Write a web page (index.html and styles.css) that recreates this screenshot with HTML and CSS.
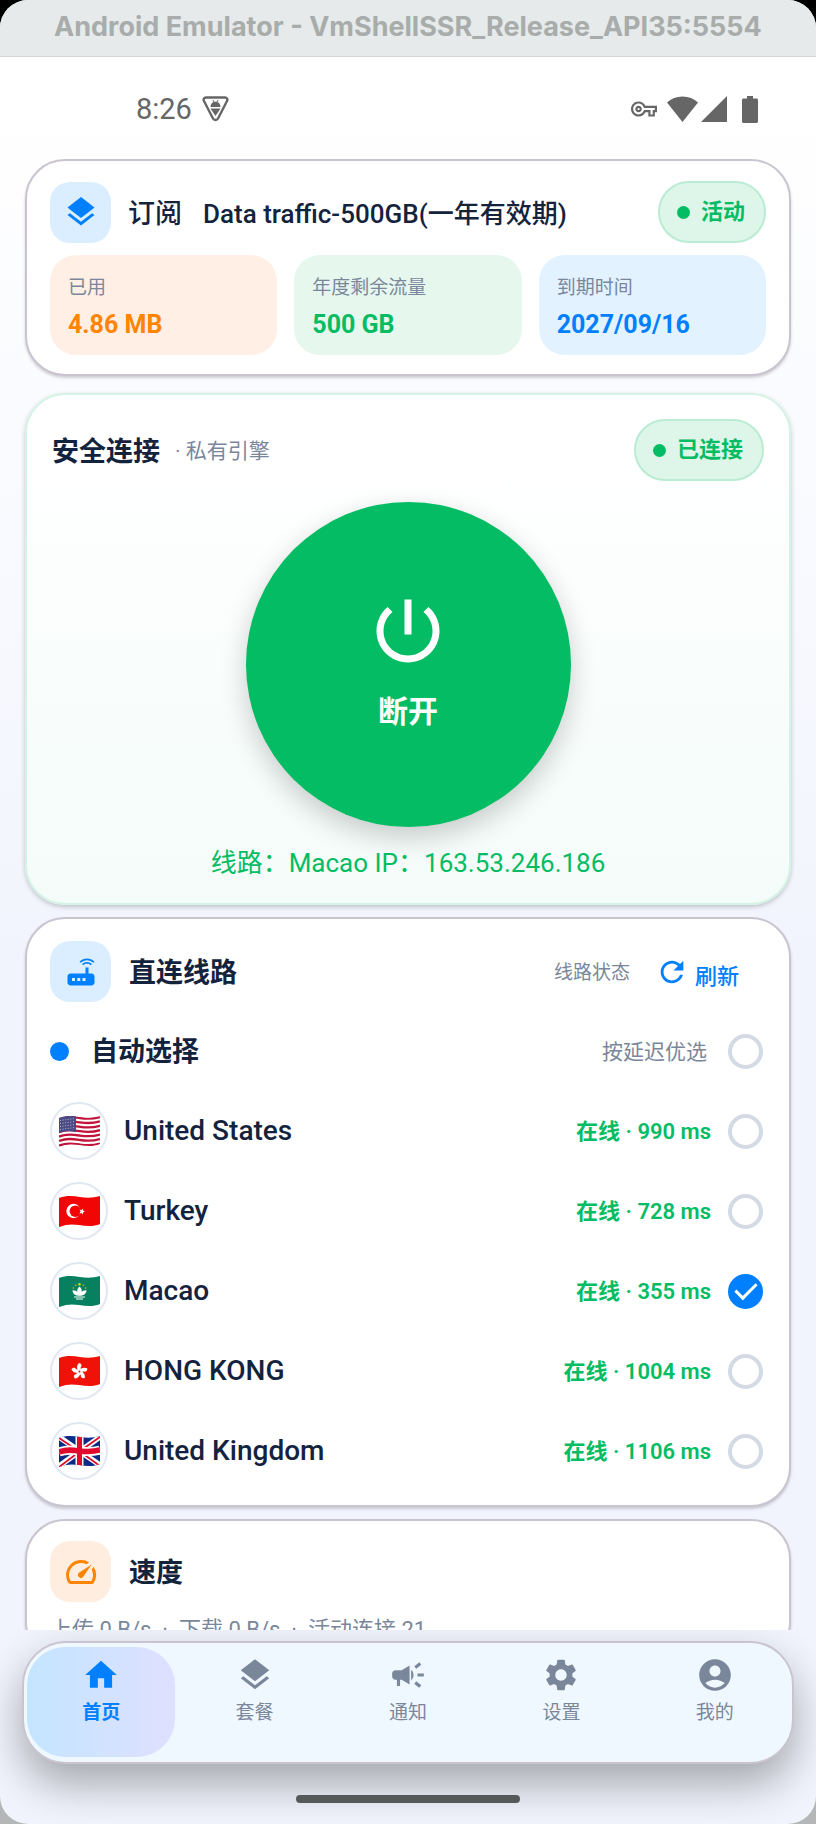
FILE: index.html
```html
<!DOCTYPE html>
<html lang="zh-CN">
<head>
  <meta charset="UTF-8" />
  <meta name="viewport" content="width=device-width, initial-scale=1" />
  <title>VmShell SSR</title>
  <link rel="stylesheet" href="styles.css">
</head>
<body>
  <div class="window">
    <div class="titlebar">Android Emulator - VmShellSSR_Release_API35:5554</div>

    <div class="statusbar">
      <span class="clock">8:26</span>
      <svg class="status-bug" viewBox="0 0 27 26" aria-hidden="true">
        <path d="M4 1.5h19c2 0 3 1.8 2 3.5L16 22.5c-1 2-4 2-5 0L2 5c-1-1.700 0-3.500 2-3.500z" fill="none" stroke="currentColor" stroke-width="2.4"/>
        <path d="M8.5 11c0-2.400 1.400-4.300 3-5L10.400 4h1l1 1.700h2.200l1-1.700h1l-1.100 2c1.600.7 3 2.600 3 5zM8.500 12.500h10L13.500 20z" fill="currentColor"/>
      </svg>
      <div class="status-icons">
        <svg class="status-key" viewBox="0 0 24 24" aria-hidden="true"><path d="M22 19h-6v-4h-2.680c-1.140 2.420-3.600 4-6.320 4-3.860 0-7-3.140-7-7s3.140-7 7-7c2.720 0 5.170 1.580 6.320 4H24v6h-2v4zm-4-2h2v-4h2v-2H11.940l-.23-.67C11.010 8.340 9.110 7 7 7c-2.760 0-5 2.240-5 5s2.240 5 5 5c2.110 0 4.010-1.340 4.710-3.330l.23-.67H18v4zM7 15c-1.650 0-3-1.350-3-3s1.350-3 3-3 3 1.350 3 3-1.350 3-3 3zm0-4c-.55 0-1 .45-1 1s.45 1 1 1 1-.45 1-1-.45-1-1-1z"/></svg>
        <svg class="status-wifi" viewBox="0 0 31 26" aria-hidden="true"><path d="M15.500 26L0 6.500C4 2.500 9.500.5 15.500.5S27 2.500 31 6.500z"/></svg>
        <svg class="status-signal" viewBox="0 0 26 26" aria-hidden="true"><path d="M0 26L26 0v26z"/></svg>
        <svg class="status-battery" viewBox="0 0 16 27" aria-hidden="true"><path d="M5 0h6v2.500h3.500c.8 0 1.500.7 1.500 1.500v21.500c0 .8-.7 1.500-1.500 1.500h-13C.7 27 0 26.300 0 25.500V4c0-.8.7-1.500 1.500-1.500H5z"/></svg>
      </div>
    </div>

    <main class="content">
      <section class="card subscription">
        <div class="card-head">
          <span class="icon-box blue">
            <svg viewBox="0 0 24 24" aria-hidden="true"><path d="M11.990 18.540l-7.370-5.730L3 14.070l9 7 9-7-1.630-1.270-7.380 5.740zM12 16l7.360-5.730L21 9l-9-7-9 7 1.630 1.270L12 16z"/></svg>
          </span>
          <h2 class="sub-title">订阅</h2>
          <span class="plan-name">Data traffic-500GB(一年有效期)</span>
          <span class="pill">活动</span>
        </div>
        <div class="stats">
          <div class="stat used">
            <span class="stat-label">已用</span>
            <strong class="stat-value">4.86 MB</strong>
          </div>
          <div class="stat left">
            <span class="stat-label">年度剩余流量</span>
            <strong class="stat-value">500 GB</strong>
          </div>
          <div class="stat expiry">
            <span class="stat-label">到期时间</span>
            <strong class="stat-value">2027/09/16</strong>
          </div>
        </div>
      </section>

      <section class="card connection">
        <div class="connection-head">
          <h2 class="connection-title">安全连接</h2>
          <span class="engine">· 私有引擎</span>
          <span class="pill">已连接</span>
        </div>
        <button class="power" type="button">
          <svg viewBox="0 0 24 24" aria-hidden="true"><path d="M13 3h-2v10h2V3zm4.830 2.170l-1.420 1.420C17.990 7.860 19 9.810 19 12c0 3.870-3.130 7-7 7s-7-3.130-7-7c0-2.190 1.010-4.140 2.580-5.420L6.170 5.170C4.230 6.820 3 9.260 3 12c0 4.970 4.030 9 9 9s9-4.030 9-9c0-2.740-1.230-5.180-3.170-6.830z"/></svg>
          <span>断开</span>
        </button>
        <p class="route-info">线路：Macao IP：163.53.246.186</p>
      </section>

      <section class="card lines">
        <div class="card-head">
          <span class="icon-box blue">
            <svg viewBox="0 0 24 24" aria-hidden="true"><path d="M20.200 5.900l.8-.8C19.600 3.700 17.800 3 16 3s-3.600.7-5 2.100l.8.8C13 4.800 14.500 4.200 16 4.200s3 .6 4.200 1.700zm-.9.8c-.9-.9-2.100-1.400-3.300-1.400s-2.400.5-3.300 1.400l.8.8c.7-.7 1.600-1 2.500-1 .9 0 1.800.3 2.500 1l.8-.8zM19 13h-2V9h-2v4H5c-1.100 0-2 .9-2 2v4c0 1.100.9 2 2 2h14c1.100 0 2-.9 2-2v-4c0-1.100-.9-2-2-2zM8 18H6v-2h2v2zm3.500 0h-2v-2h2v2zm3.500 0h-2v-2h2v2z"/></svg>
          </span>
          <h2 class="card-title">直连线路</h2>
          <span class="lines-status">线路状态</span>
          <button class="refresh" type="button">
            <svg viewBox="0 0 24 24" aria-hidden="true"><path d="M17.650 6.350C16.200 4.900 14.210 4 12 4c-4.420 0-7.990 3.580-7.990 8s3.570 8 7.990 8c3.730 0 6.840-2.550 7.730-6h-2.080c-.82 2.330-3.040 4-5.650 4-3.310 0-6-2.690-6-6s2.690-6 6-6c1.660 0 3.140.69 4.220 1.780L13 11h7V4l-2.350 2.350z"/></svg>
            <span>刷新</span>
          </button>
        </div>

        <label class="line auto">
          <span class="auto-dot"></span>
          <span class="line-name">自动选择</span>
          <span class="line-hint">按延迟优选</span>
          <input type="radio" name="line" value="auto">
        </label>

        <label class="line">
          <span class="flag">
            <svg viewBox="0 0 41 31" aria-hidden="true">
              <defs>
                <clipPath id="wave"><path d="M0 2C8-1 14 0 21 1s13 1 20-1v28c-7 3-14 2-21 1S8 28 0 31z"/></clipPath>
                <path id="stripe" d="M0 2C8-1 14 0 21 1s13 1 20-1"/>
              </defs>
              <g clip-path="url(#wave)">
                <rect width="41" height="31" fill="#fff"/>
                <g fill="none" stroke="#c2143a" stroke-width="2.3">
                  <use href="#stripe" y="1"/><use href="#stripe" y="5.4"/><use href="#stripe" y="9.8"/><use href="#stripe" y="14.2"/><use href="#stripe" y="18.6"/><use href="#stripe" y="23"/><use href="#stripe" y="27.6"/>
                </g>
                <path d="M0 0h17v16.200C11 14.600 6 14.900 0 17z" fill="#4a4a86"/>
                <path d="M1 4.500l15-2M1 7.500l15-2M1 10.500l15-2M1 13.500l15-2" stroke="#b9b9d6" stroke-width="1" stroke-dasharray="1 1.6"/>
              </g>
            </svg>
          </span>
          <span class="line-name">United States</span>
          <span class="line-ping">在线 · 990 ms</span>
          <input type="radio" name="line" value="us">
        </label>

        <label class="line">
          <span class="flag">
            <svg viewBox="0 0 41 31" aria-hidden="true">
              <g clip-path="url(#wave)">
                <rect width="41" height="31" fill="#f20505"/>
                <circle cx="14.5" cy="15" r="7.2" fill="#fff"/>
                <circle cx="16.4" cy="15.2" r="5.8" fill="#f20505"/>
                <path d="M26 15.500l-2.100.9.100 2.200-1.500-1.700-2.100.5 1.200-1.900-1.100-1.900 2.100.6 1.500-1.600.1 2.200z" fill="#fff"/>
              </g>
            </svg>
          </span>
          <span class="line-name">Turkey</span>
          <span class="line-ping">在线 · 728 ms</span>
          <input type="radio" name="line" value="tr">
        </label>

        <label class="line">
          <span class="flag">
            <svg viewBox="0 0 41 31" aria-hidden="true">
              <g clip-path="url(#wave)">
                <rect width="41" height="31" fill="#06805f"/>
                <path d="M20.500 10.500c1.900 1.700 2.600 3.500 2.200 5.500 1-1.200 2.500-1.900 4.800-1.800-.1 3.600-3.100 5.600-7 5.600s-6.900-2-7-5.600c2.300-.1 3.800.6 4.800 1.800-.4-2 .3-3.800 2.200-5.500z" fill="#fff"/>
                <path d="M15 21h11M17 23h7" stroke="#fff" stroke-width="1"/>
                <circle cx="20.5" cy="8.2" r="1.2" fill="#f5d31d"/>
                <g fill="#c5c81d"><circle cx="16.7" cy="9.300" r=".8"/><circle cx="24.300" cy="9.300" r=".8"/><circle cx="14.400" cy="12" r=".8"/><circle cx="26.600" cy="12" r=".8"/></g>
              </g>
            </svg>
          </span>
          <span class="line-name">Macao</span>
          <span class="line-ping">在线 · 355 ms</span>
          <input type="radio" name="line" value="mo" checked>
        </label>

        <label class="line">
          <span class="flag">
            <svg viewBox="0 0 41 31" aria-hidden="true">
              <defs><path id="petal" d="M20.500 15.500c-3-1.500-3.400-5.600-.4-8.400 2.600.6 3.200 3.200 1.400 4.700.9 1.300.3 2.700-1 3.700z"/></defs>
              <g clip-path="url(#wave)">
                <rect width="41" height="31" fill="#f01208"/>
                <g fill="#fff">
                  <use href="#petal"/><use href="#petal" transform="rotate(72 20.500 15.500)"/><use href="#petal" transform="rotate(144 20.500 15.500)"/><use href="#petal" transform="rotate(216 20.500 15.500)"/><use href="#petal" transform="rotate(288 20.500 15.500)"/>
                </g>
                <circle cx="20.5" cy="15.5" r="1" fill="#f01208"/>
              </g>
            </svg>
          </span>
          <span class="line-name">HONG KONG</span>
          <span class="line-ping">在线 · 1004 ms</span>
          <input type="radio" name="line" value="hk">
        </label>

        <label class="line">
          <span class="flag">
            <svg viewBox="0 0 41 31" aria-hidden="true">
              <g clip-path="url(#wave)">
                <rect width="41" height="31" fill="#0b2a86"/>
                <path d="M0 1l41 28M0 30L41 1" stroke="#fff" stroke-width="5.5"/>
                <path d="M0 2l20 13.500M41 30L21 15.500M0 31l20-15M41 1L21 15" stroke="#e00b2c" stroke-width="1.8"/>
                <path d="M20.500 0v31" stroke="#fff" stroke-width="8"/>
                <path d="M0 16c8-3 14-2 21-1s13 1 20-1" stroke="#fff" stroke-width="9" fill="none"/>
                <path d="M20.500 0v31" stroke="#e00b2c" stroke-width="5"/>
                <path d="M0 16c8-3 14-2 21-1s13 1 20-1" stroke="#e00b2c" stroke-width="5.5" fill="none"/>
              </g>
            </svg>
          </span>
          <span class="line-name">United Kingdom</span>
          <span class="line-ping">在线 · 1106 ms</span>
          <input type="radio" name="line" value="uk">
        </label>
      </section>

      <section class="card speed">
        <div class="card-head">
          <span class="icon-box orange">
            <svg viewBox="0 0 24 24" aria-hidden="true"><path d="M20.380 8.570l-1.230 1.850a8 8 0 0 1-.22 7.580H5.070A8 8 0 0 1 15.580 6.850l1.850-1.230A10 10 0 0 0 3.350 19a2 2 0 0 0 1.720 1h13.850a2 2 0 0 0 1.740-1 10 10 0 0 0-.27-10.440zm-9.790 6.840a2 2 0 0 0 2.830 0l5.660-8.490-8.490 5.660a2 2 0 0 0 0 2.830z"/></svg>
          </span>
          <h2 class="card-title">速度</h2>
        </div>
        <p class="speed-info">上传 0 B/s &nbsp;·&nbsp; 下载 0 B/s &nbsp;·&nbsp; 活动连接 21</p>
      </section>
    </main>

    <footer class="bottom">
      <nav class="tabs">
        <a class="tab active" href="#home">
          <svg viewBox="0 0 24 24" aria-hidden="true"><path d="M10 20v-6h4v6h5v-8h3L12 3 2 12h3v8z"/></svg>
          <span>首页</span>
        </a>
        <a class="tab" href="#plans">
          <svg viewBox="0 0 24 24" aria-hidden="true"><path d="M11.990 18.540l-7.370-5.730L3 14.070l9 7 9-7-1.630-1.270-7.380 5.740zM12 16l7.360-5.730L21 9l-9-7-9 7 1.630 1.270L12 16z"/></svg>
          <span>套餐</span>
        </a>
        <a class="tab" href="#notices">
          <svg viewBox="0 0 24 24" aria-hidden="true"><path d="M18 11v2h4v-2h-4zm-2 6.610c.96.71 2.210 1.650 3.200 2.390.4-.53.8-1.070 1.200-1.600-.99-.74-2.240-1.680-3.200-2.400-.4.54-.8 1.080-1.200 1.610zM20.400 5.600c-.4-.53-.8-1.070-1.200-1.600-.99.74-2.240 1.680-3.200 2.400.4.53.8 1.070 1.200 1.600.96-.72 2.210-1.650 3.200-2.400zM4 9c-1.100 0-2 .9-2 2v2c0 1.100.9 2 2 2h1v4h2v-4h1l5 3V6L8 9H4zm11.500 3c0-1.330-.58-2.530-1.500-3.350v6.690c.92-.81 1.500-2.010 1.500-3.340z"/></svg>
          <span>通知</span>
        </a>
        <a class="tab" href="#settings">
          <svg viewBox="0 0 24 24" aria-hidden="true"><path d="M19.140 12.940c.04-.3.06-.61.06-.94 0-.32-.02-.64-.07-.94l2.030-1.580c.18-.14.23-.41.12-.61l-1.920-3.320c-.12-.22-.37-.29-.59-.22l-2.390.96c-.5-.38-1.030-.7-1.620-.94l-.36-2.540c-.04-.24-.24-.41-.48-.41h-3.840c-.24 0-.43.17-.47.41l-.36 2.540c-.59.24-1.130.57-1.620.94l-2.390-.96c-.22-.08-.47 0-.59.22L2.740 8.870c-.12.21-.08.47.12.61l2.030 1.580c-.05.3-.09.63-.09.94s.02.64.07.94l-2.030 1.580c-.18.14-.23.41-.12.61l1.920 3.320c.12.22.37.29.59.22l2.390-.96c.5.38 1.030.7 1.620.94l.36 2.540c.05.24.24.41.48.41h3.840c.24 0 .44-.17.47-.41l.36-2.540c.59-.24 1.130-.56 1.620-.94l2.390.96c.22.08.47 0 .59-.22l1.920-3.320c.12-.22.07-.47-.12-.61l-2.010-1.580zM12 15.600c-1.980 0-3.600-1.620-3.600-3.600s1.620-3.600 3.600-3.600 3.600 1.620 3.600 3.600-1.620 3.600-3.600 3.600z"/></svg>
          <span>设置</span>
        </a>
        <a class="tab" href="#me">
          <svg viewBox="0 0 24 24" aria-hidden="true"><path d="M12 2C6.480 2 2 6.480 2 12s4.480 10 10 10 10-4.480 10-10S17.520 2 12 2zm0 4c1.930 0 3.500 1.570 3.500 3.500S13.930 13 12 13s-3.500-1.570-3.500-3.500S10.070 6 12 6zm0 14c-2.030 0-4.430-.82-6.140-2.880C7.550 15.800 9.680 15 12 15s4.450.8 6.140 2.120C16.430 19.180 14.030 20 12 20z"/></svg>
          <span>我的</span>
        </a>
      </nav>
      <div class="home-bar"></div>
    </footer>
  </div>
</body>
</html>
```
FILE: styles.css
```css
* {
  box-sizing: border-box;
}
html {
  background: linear-gradient(#000 50%, #b5b6b8 50%);
}
body {
  margin: 0;
  font-family: Roboto, "Noto Sans CJK SC", sans-serif;
  color: #14233d;
}
h2, p {
  margin: 0;
}
svg {
  display: block;
  flex: none;
  fill: currentColor;
}
button {
  font-family: inherit;
  border: 0;
  cursor: pointer;
}

.window {
  display: flex;
  flex-direction: column;
  height: 100vh;
  border-radius: 28px;
  overflow: hidden;
  background: linear-gradient(#fff 5%, #f1f4fd 55%);
}
.titlebar {
  flex: none;
  height: 57px;
  padding-top: 2px;
  line-height: 50px;
  text-align: center;
  white-space: nowrap;
  font-family: Inter, sans-serif;
  font-size: 27px;
  font-weight: 700;
  color: #a8acab;
  background: #e6eaea;
  border-bottom: 1px solid #d2d5d5;
}

/* status bar */
.statusbar {
  display: flex;
  align-items: center;
  flex: none;
  height: 102px;
  padding: 2px 58px 0 136px;
  color: #666;
}
.clock {
  font-size: 29px;
  line-height: 34px;
}
.status-bug {
  width: 27px;
  height: 26px;
  margin-left: 10px;
}
.status-icons {
  display: flex;
  align-items: center;
  margin-left: auto;
}
.status-key {
  width: 26px;
  height: 26px;
}
.status-wifi {
  width: 31px;
  height: 26px;
  margin-left: 10px;
}
.status-signal {
  width: 26px;
  height: 26px;
  margin-left: 3px;
}
.status-battery {
  width: 16px;
  height: 27px;
  margin-left: 15px;
}

/* cards */
.content {
  flex: 1;
  min-height: 0;
  overflow: hidden;
  padding: 0 25px;
}
.card {
  margin-bottom: 12px;
  padding: 20px 23px 16px;
  background: #fff;
  border: 2px solid #cac4d0;
  border-radius: 40px;
  box-shadow: 0 2px 3px rgba(0, 0, 0, 0.18);
}
.card-head {
  display: flex;
  align-items: center;
}
.icon-box {
  display: grid;
  place-items: center;
  width: 61px;
  height: 61px;
  border-radius: 20px;
}
.icon-box svg {
  width: 36px;
  height: 36px;
}
.icon-box.blue {
  color: #0080ff;
  background: #dbeeff;
}
.icon-box.orange {
  color: #ff8500;
  background: #ffeddf;
}
.card-title {
  margin-left: 18px;
  padding-top: 2px;
  font-size: 27px;
  font-weight: 600;
  line-height: 32px;
}
.pill {
  display: flex;
  align-items: center;
  gap: 11px;
  height: 62px;
  margin-left: auto;
  padding: 0 19px 0 17px;
  font-size: 22px;
  font-weight: 600;
  line-height: 28px;
  color: #04bc63;
  background: #def6e9;
  border: 2px solid #b9ecd3;
  border-radius: 31px;
}
.pill::before {
  content: "";
  width: 13px;
  height: 13px;
  border-radius: 50%;
  background: #04bc63;
}

/* subscription */
.subscription {
  margin-bottom: 17px;
  padding-bottom: 19px;
}
.sub-title {
  margin-left: 17px;
  padding-top: 4px;
  font-size: 27px;
  font-weight: 500;
  line-height: 32px;
}
.plan-name {
  margin-left: 21px;
  padding-top: 4px;
  font-size: 26px;
  font-weight: 500;
  line-height: 32px;
}
.stats {
  display: grid;
  grid-template-columns: repeat(3, 1fr);
  gap: 17px;
  margin-top: 12px;
}
.stat {
  display: flex;
  flex-direction: column;
  gap: 11px;
  padding: 21px 18px 16px;
  border-radius: 26px;
}
.stat-label {
  font-size: 19px;
  line-height: 24px;
  color: #7a879b;
}
.stat-value {
  font-size: 25px;
  font-weight: 700;
  line-height: 28px;
}
.used {
  background: #ffefe4;
}
.used .stat-value {
  color: #ff8500;
}
.left {
  background: #e6f7ed;
}
.left .stat-value {
  color: #04bc63;
}
.expiry {
  background: #e3f2ff;
}
.expiry .stat-value {
  color: #0080ff;
}

/* connection */
.connection {
  display: flex;
  flex-direction: column;
  padding: 24px 25px;
  background: linear-gradient(#fff 10%, #f4fcf9);
  border-color: #d5f3e5;
  box-shadow: 0 2px 5px rgba(0, 0, 0, 0.22);
}
.connection-head {
  display: flex;
  align-items: center;
}
.connection-title {
  padding-top: 4px;
  font-size: 27px;
  font-weight: 700;
  line-height: 32px;
}
.engine {
  margin-left: 15px;
  padding-top: 2px;
  font-size: 21px;
  line-height: 26px;
  color: #7a879b;
}
.power {
  display: flex;
  flex-direction: column;
  align-items: center;
  justify-content: center;
  gap: 21px;
  width: 325px;
  height: 325px;
  margin: 21px auto 20px;
  padding: 0 0 10px;
  color: #fff;
  background: #04bc63;
  border-radius: 50%;
  box-shadow: 0 10px 28px rgba(0, 0, 0, 0.2);
}
.power svg {
  width: 84px;
  height: 84px;
}
.power span {
  font-size: 30px;
  font-weight: 600;
  line-height: 36px;
}
.route-info {
  font-size: 26px;
  line-height: 32px;
  text-align: center;
  color: #04bc63;
}

/* lines */
.lines {
  padding-top: 22px;
  padding-bottom: 14px;
}
.lines-status {
  margin-left: auto;
  padding-top: 2px;
  font-size: 19px;
  line-height: 24px;
  color: #7a879b;
}
.refresh {
  display: flex;
  align-items: flex-end;
  gap: 6px;
  padding: 0 27px 0 25px;
  font-size: 22px;
  font-weight: 500;
  line-height: 24px;
  color: #0080ff;
  background: none;
}
.refresh svg {
  width: 34px;
  height: 34px;
}
.line {
  display: flex;
  align-items: center;
  height: 80px;
  padding-right: 3px;
  cursor: pointer;
}
.auto {
  margin-top: 9px;
}
.auto-dot {
  width: 19px;
  height: 19px;
  margin-right: 6px;
  border-radius: 50%;
  background: #0080ff;
}
.flag {
  display: grid;
  place-items: center;
  width: 58px;
  height: 58px;
  background: #fff;
  border: 2px solid #e1e8f2;
  border-radius: 50%;
}
.flag svg {
  width: 41px;
  height: 31px;
}
.line-name {
  margin-left: 16px;
  font-size: 28px;
  font-weight: 500;
  line-height: 32px;
}
.auto .line-name {
  padding-top: 2px;
  font-size: 27px;
  font-weight: 600;
}
.line-hint, .line-ping {
  margin-left: auto;
  padding-top: 2px;
  font-size: 21px;
  line-height: 26px;
}
.line-hint {
  margin-right: 21px;
  color: #7a879b;
}
.line-ping {
  margin-right: 17px;
  font-size: 22px;
  font-weight: 600;
  color: #04bc63;
}
.line input {
  appearance: none;
  display: grid;
  place-items: center;
  width: 35px;
  height: 35px;
  margin: 0;
  border: 4px solid #d3dae4;
  border-radius: 50%;
  cursor: pointer;
}
.line input:checked {
  background: #0080ff;
  border-color: #0080ff;
}
.line input:checked::after {
  content: "";
  width: 9px;
  height: 18px;
  margin-bottom: 6px;
  border: solid #fff;
  border-width: 0 3px 3px 0;
  transform: rotate(45deg);
}

.speed-info {
  margin-top: 14px;
  font-size: 22px;
  line-height: 28px;
  color: #7a879b;
}

/* bottom navigation */
.bottom {
  flex: none;
  padding: 11px 22px 21px;
  overflow: hidden;
}
.tabs {
  display: grid;
  grid-template-columns: repeat(5, 1fr);
  gap: 5px;
  padding: 4px 3px 5px;
  background: #f0f8ff;
  border: 2px solid #cac4d0;
  border-radius: 44px;
  box-shadow: 0 20px 44px rgba(0, 0, 0, 0.32);
}
.tab {
  display: flex;
  flex-direction: column;
  align-items: center;
  gap: 7px;
  height: 110px;
  padding-top: 9px;
  font-size: 19px;
  line-height: 24px;
  color: #7a879b;
  text-decoration: none;
  border-radius: 38px;
}
.tab svg {
  width: 38px;
  height: 38px;
}
.tab.active {
  font-weight: 700;
  color: #0080ff;
  background: linear-gradient(90deg, #c4e5ff, #dee0ff);
}
.home-bar {
  width: 224px;
  height: 8px;
  margin: 31px auto 0;
  border-radius: 4px;
  background: #57585a;
}
```
